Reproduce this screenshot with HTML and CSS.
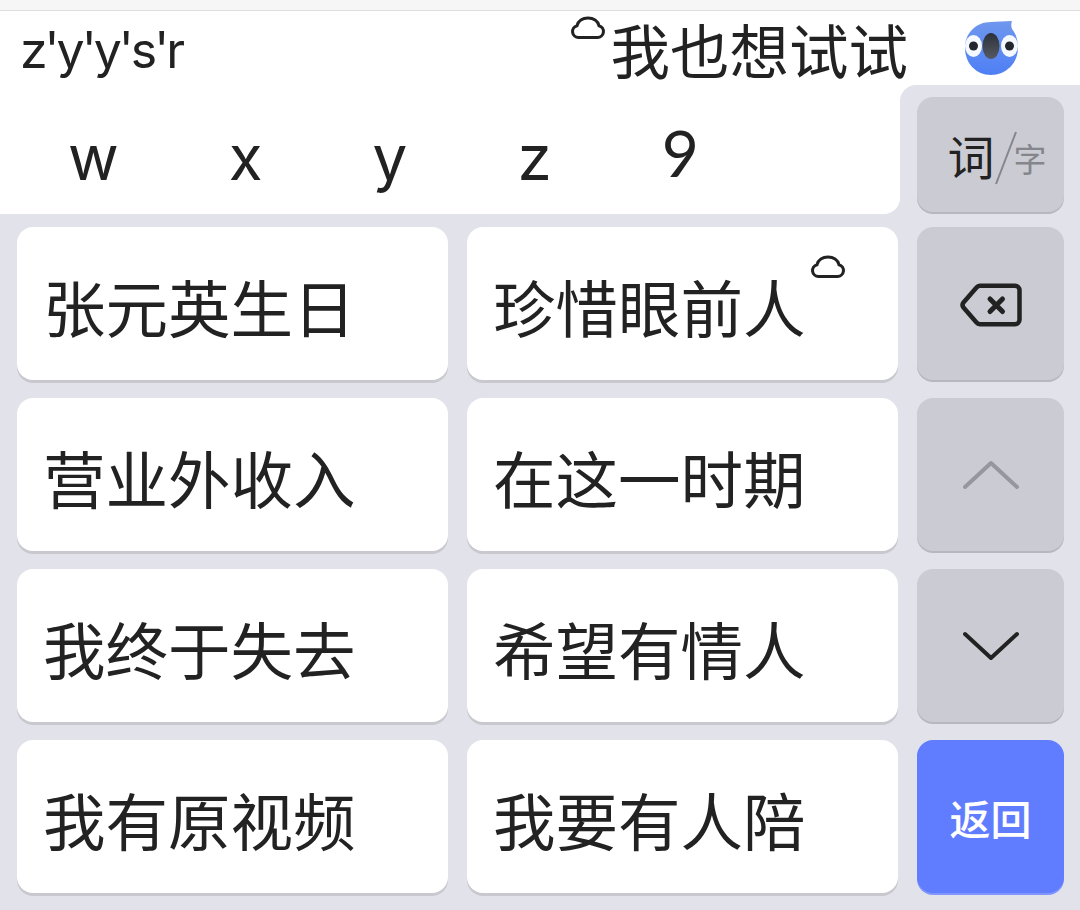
FILE: index.html
```html
<!DOCTYPE html>
<html lang="zh-CN">

<head>
  <meta charset="UTF-8">
  <title>键盘</title>
  <link rel="stylesheet" href="styles.css">
</head>

<body>
  <div class="topStrip"></div>

  <!-- input line -->
  <div class="preedit">
    <span class="pinyin">z'y'y's'r</span>
    <svg class="cloud cloudTop" viewBox="0 0 36 24"><path d="M8.500 21.500h19a6 6 0 0 0 1.500-11.800C27.800 5 23.500 2 18 2S8.200 5 7 9.700a6 6 0 0 0 1.500 11.800z"/></svg>
    <span class="suggest">我也想试试</span>
    <svg class="bird" viewBox="0 0 53 54">
      <defs>
        <linearGradient id="birdFill" x1="0" y1="0" x2="0" y2="1">
          <stop offset="0" stop-color="#6f97ee"/>
          <stop offset="1" stop-color="#4f7ff5"/>
        </linearGradient>
        <linearGradient id="noseFill" x1="0" y1="0" x2="0" y2="1">
          <stop offset="0" stop-color="#2c3038"/>
          <stop offset="1" stop-color="#565a62"/>
        </linearGradient>
      </defs>
      <path class="birdBody" d="M26 1c6 0 13-1 21-1-1 3-1 5 0 8 4 5 6 11 6 19 0 15-12 27-27 27S0 42 0 27 11 1 26 1z"/>
      <ellipse class="birdEye" cx="8.500" cy="25" rx="8.500" ry="11"/>
      <ellipse class="birdEye" cx="44.500" cy="25" rx="8.500" ry="11"/>
      <circle class="birdPupil" cx="8.500" cy="25" r="4.500"/>
      <circle class="birdPupil" cx="44.500" cy="25" r="4.500"/>
      <ellipse class="birdNose" cx="26" cy="25" rx="8.500" ry="13"/>
    </svg>
  </div>

  <div class="board">
    <div class="upper">
      <div class="letters">
        <span>w</span>
        <span>x</span>
        <span>y</span>
        <span>z</span>
        <span class="digit">9</span>
      </div>
      <div class="sideTop">
        <div class="key sideKey wordKey">
          <span class="wordMain">词</span>
          <svg class="wordSlash" viewBox="0 0 22 54"><path d="M21 1 1 53"/></svg>
          <span class="wordSub">字</span>
        </div>
      </div>
    </div>

    <div class="keys">
      <div class="key cand">张元英生日</div>
      <div class="key cand">珍惜眼前人
        <svg class="cloud cloudKey" viewBox="0 0 36 24"><path d="M8.500 21.500h19a6 6 0 0 0 1.500-11.800C27.800 5 23.500 2 18 2S8.200 5 7 9.700a6 6 0 0 0 1.500 11.800z"/></svg>
      </div>
      <div class="key sideKey">
        <svg class="icon iconBack" width="62" height="44" viewBox="0 0 62 44"><path d="M3.500 19.500 16.500 4.500a5 5 0 0 1 3.500-1.800h35a4.500 4.500 0 0 1 4.500 4.500v29.600a4.500 4.500 0 0 1-4.500 4.500H20a5 5 0 0 1-3.500-1.800L3.500 24.500a4 4 0 0 1 0-5z" stroke-width="4.500"/><path d="M30 16l12.500 12.500M42.500 16 30 28.500" stroke-width="5"/></svg>
      </div>

      <div class="key cand">营业外收入</div>
      <div class="key cand">在这一时期</div>
      <div class="key sideKey">
        <svg class="icon iconDim" width="56" height="30" viewBox="0 0 56 30"><path d="M2 27 28 3l26 24" stroke-width="4"/></svg>
      </div>

      <div class="key cand">我终于失去</div>
      <div class="key cand">希望有情人</div>
      <div class="key sideKey">
        <svg class="icon" width="56" height="30" viewBox="0 0 56 30"><path d="M2 3l26 24L54 3" stroke-width="4"/></svg>
      </div>

      <div class="key cand">我有原视频</div>
      <div class="key cand">我要有人陪</div>
      <div class="key sideKey backKey">返回</div>
    </div>
  </div>
</body>

</html>
```

FILE: styles.css
```css
body {
  margin: 0;
  width: 1080px;
  height: 910px;
  overflow: hidden;
  background: #e2e2ea;
  color: #222;
  font-family: "Inter", "Noto Sans CJK SC", sans-serif;
}

.topStrip {
  height: 10px;
  background: #f6f6f6;
  border-bottom: 1px solid #dedede;
}

.preedit {
  display: flex;
  align-items: center;
  height: 74px;
  background: #fff;
}

.pinyin {
  margin-left: 20px;
  margin-right: auto;
  padding-top: 3px;
  font-size: 50px;
  letter-spacing: -3px;
  line-height: 74px;
}

.cloud path {
  fill: none;
  stroke: #222;
  stroke-width: 3;
}

.cloudTop {
  align-self: flex-start;
  width: 36px;
  height: 24px;
  margin-top: 5px;
  margin-right: 5px;
}

.suggest {
  font-family: "Noto Sans CJK SC", sans-serif;
  font-size: 59.500px;
  line-height: 74px;
}

.bird {
  width: 53px;
  height: 54px;
  margin-left: 57px;
  margin-right: 62px;
  filter: blur(0.6px);
}

.birdBody {
  fill: url(#birdFill);
}

.birdEye {
  fill: #f6f8ff;
}

.birdPupil {
  fill: #23262e;
}

.birdNose {
  fill: url(#noseFill);
}

.board {
  background: #e2e2ea;
}

.upper {
  display: flex;
  height: 129px;
  background: linear-gradient(#fff 50%, #e2e2ea 50%);
}

.letters {
  display: flex;
  flex: 1;
  gap: 110px;
  padding-left: 68px;
  background: #fff;
  border-bottom-right-radius: 16px;
  font-size: 62px;
  line-height: 146px;
}

.letters .digit {
  font-family: "Lato", sans-serif;
  font-size: 64px;
  line-height: 136px;
}

.sideTop {
  flex: none;
  width: 180px;
  padding: 12px 16px 0 17px;
  box-sizing: border-box;
  background: #e2e2ea;
  border-top-left-radius: 16px;
}

.key {
  display: flex;
  align-items: center;
  justify-content: center;
  box-sizing: border-box;
  border-radius: 16px;
}

.keys {
  display: grid;
  grid-template-columns: 431px 431px 147px;
  grid-auto-rows: 153px;
  column-gap: 19px;
  row-gap: 18px;
  padding: 13px 0 0 17px;
}

.cand {
  position: relative;
  justify-content: flex-start;
  padding: 4px 0 0 26px;
  background: #fff;
  box-shadow: 0 3px 0 #c8c8ce;
  font-family: "Noto Sans CJK SC", sans-serif;
  font-size: 62.500px;
}

.sideKey {
  width: 147px;
  background: #cbcbd3;
  box-shadow: 0 2px 0 #b7b7bf;
}

.wordKey {
  height: 115px;
  padding-left: 13px;
  font-family: "Noto Sans CJK SC", sans-serif;
}

.wordMain {
  font-size: 47px;
  color: #222;
}

.wordSlash {
  flex: none;
  width: 22px;
  height: 54px;
  margin: 6px -3px 0 0;
}

.wordSlash path {
  fill: none;
  stroke: #85858c;
  stroke-width: 2;
}

.wordSub {
  margin-top: 6px;
  font-size: 33px;
  color: #85858c;
}

.icon path {
  fill: none;
  stroke: #222;
  stroke-linecap: round;
  stroke-linejoin: round;
}

.iconBack {
  margin-top: 2px;
}

.iconDim path {
  stroke: #96969e;
}

.cloudKey {
  position: absolute;
  top: 28px;
  left: 343px;
  width: 36px;
  height: 24px;
}

.backKey {
  background: #617dff;
  box-shadow: 0 2px 0 #7f95ff;
  color: #fff;
  font-family: "Noto Sans CJK SC", sans-serif;
  font-size: 41px;
  font-weight: 500;
}
```
